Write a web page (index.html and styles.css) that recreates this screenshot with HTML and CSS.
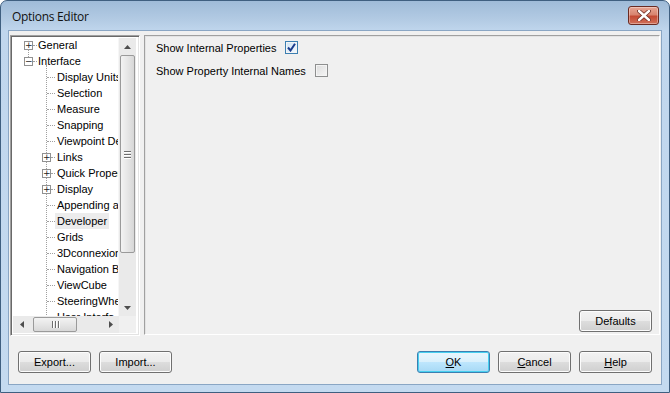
FILE: index.html
```html
<!DOCTYPE html>
<html lang="en">
<head>
    <meta charset="UTF-8">
    <title>Options Editor</title>
    <link rel="stylesheet" href="styles.css">
</head>
<body>
    <div class="window">
        <div class="titlebar">
            <span class="title">Options Editor</span>
            <div class="close-btn">
                <svg width="14" height="11" viewBox="0 0 14 11"><path d="M2 1 L12 10 M12 1 L2 10" stroke="#6b2a22" stroke-width="4" stroke-linecap="round"/><path d="M2 1 L12 10 M12 1 L2 10" stroke="#fff" stroke-width="2.4" stroke-linecap="round"/></svg>
            </div>
        </div>
        <div class="client">
            <div class="main">
                <div class="tree">
                    <div class="tree-view">
                        <div class="tree-body">
                            <div class="row top first"><span class="exp">+</span><span class="dots"></span><span class="label">General</span></div>
                            <div class="row top"><span class="exp">&minus;</span><span class="dots"></span><span class="label">Interface</span></div>
                            <div class="children">
                                <div class="row"><span class="dots long"></span><span class="label">Display Units</span></div>
                                <div class="row"><span class="dots long"></span><span class="label">Selection</span></div>
                                <div class="row"><span class="dots long"></span><span class="label">Measure</span></div>
                                <div class="row"><span class="dots long"></span><span class="label">Snapping</span></div>
                                <div class="row"><span class="dots long"></span><span class="label">Viewpoint De</span></div>
                                <div class="row"><span class="exp sub">+</span><span class="dots"></span><span class="label">Links</span></div>
                                <div class="row"><span class="exp sub">+</span><span class="dots"></span><span class="label">Quick Proper</span></div>
                                <div class="row"><span class="exp sub">+</span><span class="dots"></span><span class="label">Display</span></div>
                                <div class="row"><span class="dots long"></span><span class="label">Appending a</span></div>
                                <div class="row"><span class="dots long"></span><span class="label selected">Developer</span></div>
                                <div class="row"><span class="dots long"></span><span class="label">Grids</span></div>
                                <div class="row"><span class="dots long"></span><span class="label">3Dconnexion</span></div>
                                <div class="row"><span class="dots long"></span><span class="label">Navigation B</span></div>
                                <div class="row"><span class="dots long"></span><span class="label">ViewCube</span></div>
                                <div class="row"><span class="dots long"></span><span class="label">SteeringWhe</span></div>
                                <div class="row"><span class="dots long"></span><span class="label">User Interfa</span></div>
                            </div>
                        </div>
                        <div class="vscroll">
                            <div class="arrow"><svg width="7" height="4" viewBox="0 0 7 4"><path d="M0 4 L3.5 0 L7 4 Z" fill="#4d4d4d"/></svg></div>
                            <div class="vthumb"><span class="grip-h"></span><span class="grip-h"></span><span class="grip-h"></span></div>
                            <div class="vtrack"></div>
                            <div class="arrow"><svg width="7" height="4" viewBox="0 0 7 4"><path d="M0 0 L3.5 4 L7 0 Z" fill="#4d4d4d"/></svg></div>
                        </div>
                    </div>
                    <div class="hbar">
                        <div class="hscroll">
                            <div class="arrow"><svg width="4" height="7" viewBox="0 0 4 7"><path d="M4 0 L0 3.5 L4 7 Z" fill="#4d4d4d"/></svg></div>
                            <div class="hthumb"><span class="grip-v"></span><span class="grip-v"></span><span class="grip-v"></span></div>
                            <div class="htrack"></div>
                            <div class="arrow"><svg width="4" height="7" viewBox="0 0 4 7"><path d="M0 0 L4 3.5 L0 7 Z" fill="#4d4d4d"/></svg></div>
                        </div>
                        <div class="corner"></div>
                    </div>
                </div>
                <div class="panel">
                    <div class="option">
                        <span>Show Internal Properties</span>
                        <span class="check checked">
                            <svg width="9" height="9" viewBox="0 0 9 9"><path d="M1 4.5 L3.5 7.5 L8 0.8" fill="none" stroke="#1c3c8c" stroke-width="2"/></svg>
                        </span>
                    </div>
                    <div class="option">
                        <span>Show Property Internal Names</span>
                        <span class="check"></span>
                    </div>
                    <div class="panel-foot">
                        <button class="btn">Defaults</button>
                    </div>
                </div>
            </div>
            <div class="buttons">
                <div class="btn-group">
                    <button class="btn">Export...</button>
                    <button class="btn">Import...</button>
                </div>
                <div class="btn-group">
                    <button class="btn default"><u>O</u>K</button>
                    <button class="btn"><u>C</u>ancel</button>
                    <button class="btn"><u>H</u>elp</button>
                </div>
            </div>
        </div>
    </div>
</body>
</html>
```

FILE: styles.css
```css
body {
    margin: 0;
    padding: 0;
    font-family: "Liberation Sans", Arial, sans-serif;
    font-size: 11px;
    color: #000;
    background: #fff;
}
.window {
    width: 670px;
    height: 393px;
    box-sizing: border-box;
    border: 1px solid #3f5f80;
    border-radius: 7px 7px 0 0;
    background: linear-gradient(to bottom, #9fbbd8 0px, #b2cae3 18px, #c0d6ed 30px, #c4daf0 100%);
    display: flex;
    flex-direction: column;
}
.titlebar {
    height: 29px;
    display: flex;
    align-items: center;
    justify-content: space-between;
    padding-left: 11px;
    padding-right: 10px;
}
.title {
    font-family: "Open Sans", sans-serif;
    font-size: 12px;
    color: #111;
    margin-top: 1px;
    letter-spacing: -0.3px;
}
.close-btn {
    width: 29px;
    height: 17px;
    margin-top: -1px;
    border: 1px solid #6a2a22;
    border-radius: 3px;
    background: linear-gradient(to bottom, #e7a593 0%, #d88470 45%, #c44a34 55%, #d0705a 100%);
    display: flex;
    align-items: center;
    justify-content: center;
    box-shadow: inset 0 0 0 1px rgba(255,255,255,0.35);
}
.client {
    flex: 1;
    margin: 0 7px 7px 7px;
    background: #f0f0f0;
    border: 1px solid #8aa6c4;
    display: flex;
    flex-direction: column;
}
.main {
    display: flex;
    padding: 4px 0 0 1px;
    height: 301px;
}
.tree {
    width: 130px;
    box-sizing: border-box;
    border: 1px solid #a0a0a0;
    border-right-color: #fff;
    border-bottom-color: #fff;
    background: #fff;
    box-shadow: inset 1px 1px #696969, inset -1px -1px #e3e3e3;
    padding: 2px 3px 2px 2px;
    display: flex;
    flex-direction: column;
}
.tree-view {
    flex: 1;
    display: flex;
    overflow: hidden;
}
.tree-body {
    flex: 1;
    overflow: hidden;
    position: relative;
    padding-left: 11px;
    padding-top: 0;
    margin-top: -1px;
}
.row {
    height: 16px;
    display: flex;
    align-items: center;
    white-space: nowrap;
}
.row.first {
    position: relative;
}
.row.first::after {
    content: "";
    position: absolute;
    left: 4px;
    top: 12px;
    height: 8px;
    border-left: 1px dotted #a0a0a0;
}
.exp {
    width: 7px;
    height: 7px;
    border: 1px solid #919191;
    background: #fff;
    font-size: 9px;
    line-height: 7px;
    text-align: center;
    color: #222;
    flex: none;
    font-family: "DejaVu Sans", sans-serif;
}
.dots {
    width: 4px;
    border-top: 1px dotted #a0a0a0;
    margin: 0;
    flex: none;
}
.dots.long {
    width: 8px;
}
.label {
    padding: 0 2px 0 1px;
    line-height: 16px;
}
.children .label {
    padding-left: 2px;
}
.label.selected {
    background: #ececec;
}
.children {
    margin-left: 22px;
    border-left: 1px dotted #a0a0a0;
    margin-top: -4px;
    padding-top: 4px;
}
.children .exp.sub {
    margin-left: -5px;
}
.vscroll {
    width: 17px;
    display: flex;
    flex-direction: column;
    background: #eaeaea;
    border-left: 1px solid #f6f6f6;
}
.arrow {
    height: 17px;
    flex: none;
    display: flex;
    align-items: center;
    justify-content: center;
}
.vthumb {
    height: 196px;
    margin: 0 1px;
    flex: none;
    border: 1px solid #9a9a9a;
    border-radius: 2px;
    background: linear-gradient(to right, #f3f3f3, #e6e6e6 50%, #d8d8d8);
    display: flex;
    flex-direction: column;
    align-items: center;
    justify-content: center;
    gap: 2px;
}
.grip-h {
    width: 7px;
    height: 1px;
    background: #6e6e6e;
    box-shadow: 0 1px #fff;
}
.vtrack, .htrack {
    flex: 1;
}
.hbar {
    height: 17px;
    display: flex;
    flex: none;
}
.hscroll {
    flex: 1;
    display: flex;
    background: #eaeaea;
}
.hscroll .arrow {
    width: 17px;
    height: auto;
}
.hthumb {
    width: 42px;
    margin: 1px 0 1px 3px;
    flex: none;
    border: 1px solid #9a9a9a;
    border-radius: 2px;
    background: linear-gradient(to bottom, #f3f3f3, #e6e6e6 50%, #d8d8d8);
    display: flex;
    align-items: center;
    justify-content: center;
    gap: 2px;
}
.grip-v {
    width: 1px;
    height: 7px;
    background: #6e6e6e;
    box-shadow: 1px 0 #fff;
}
.corner {
    width: 17px;
    background: #f0f0f0;
}
.panel {
    flex: 1;
    margin-left: 4px;
    border: 1px solid #a0a0a0;
    border-right-color: #fff;
    border-bottom-color: #fff;
    box-shadow: inset 1px 1px #e3e3e3;
    padding: 0 7px 2px 11px;
    display: flex;
    flex-direction: column;
    margin-right: 1px;
    height: 300px;
    box-sizing: border-box;
}
.option {
    display: flex;
    align-items: center;
    gap: 9px;
    height: 23px;
}
.check {
    width: 11px;
    height: 11px;
    border: 1px solid #8e8f8f;
    background: linear-gradient(135deg, #dcdcdc, #f6f6f6);
    box-shadow: inset 0 0 0 1px #f4f4f4;
    display: flex;
    align-items: center;
    justify-content: center;
}
.check.checked {
    border-color: #3c7fb1;
    background: linear-gradient(135deg, #cfe4f5, #f4f9fd);
}
.panel-foot {
    margin-top: auto;
    display: flex;
    justify-content: flex-end;
}
.btn {
    width: 73px;
    height: 22px;
    border: 1px solid #707070;
    border-radius: 3px;
    background: linear-gradient(to bottom, #f2f2f2 0%, #ebebeb 50%, #dddddd 51%, #cfcfcf 100%);
    box-shadow: inset 0 0 0 1px #fcfcfc;
    font-family: "Liberation Sans", Arial, sans-serif;
    font-size: 11px;
    color: #000;
    padding: 0;
}
.btn.default {
    border-color: #3c7fb1;
    background: linear-gradient(to bottom, #eaf6fd 0%, #d9f0fc 50%, #bee6fd 51%, #a7d9f5 100%);
    box-shadow: inset 0 0 0 1px #48d0f0;
}
.buttons {
    flex: 1;
    display: flex;
    justify-content: space-between;
    align-items: center;
    padding: 3px 9px 0 9px;
}
.btn-group {
    display: flex;
    gap: 8px;
}
```
